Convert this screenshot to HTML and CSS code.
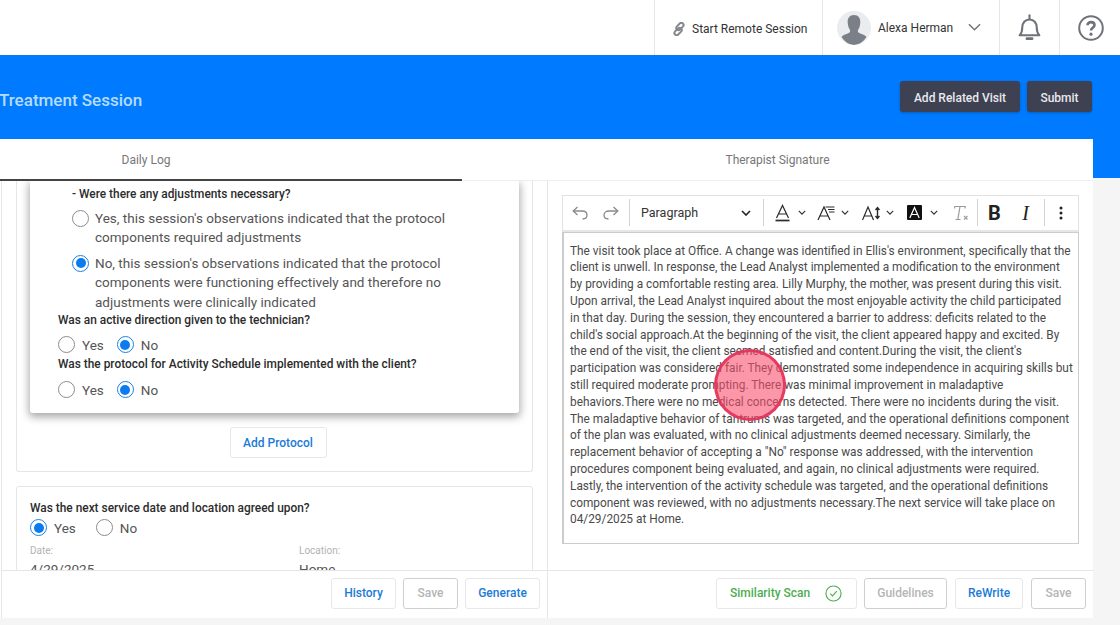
FILE: index.html
```html
<!DOCTYPE html>
<html lang="en">
<head>
<meta charset="utf-8">
<title>Treatment Session</title>
<link rel="stylesheet" href="styles.css">
</head>
<body>
<header class="topbar">
  <div class="top-cell remote">
    <svg class="link-icon" viewBox="0 0 14 14" width="14" height="14" fill="none" stroke="#85888e" stroke-width="2"><rect x="5.700" y="0.300" width="4.400" height="8.400" rx="2.200" transform="rotate(45 7.900 4.500)"/><rect x="3.900" y="5.300" width="4.400" height="8.400" rx="2.200" transform="rotate(45 6.100 9.500)"/></svg>
    <span>Start Remote Session</span>
  </div>
  <div class="top-cell user">
    <span class="avatar"><svg viewBox="0 0 34 34" width="34" height="34"><path fill="#7b7f87" d="M17 4c4.500 0 6.600 3.300 6.300 7.500-.2 2.800-.7 5.200-2 7-.7 1-.6 2.600.6 3.300 2.400 1.300 6 2.100 7.600 4.200A16.800 16.800 0 0 1 17 34 16.800 16.800 0 0 1 4.500 26c1.600-2.100 5.200-2.900 7.600-4.200 1.200-.7 1.300-2.300.6-3.300-1.300-1.800-1.800-4.200-2-7C10.400 7.300 12.500 4 17 4z"/></svg></span>
    <span class="user-name">Alexa Herman</span>
    <svg class="user-chev" viewBox="0 0 14 8" width="13" height="8" fill="none" stroke="#73767c" stroke-width="1.600"><path d="M1 1l6 6 6-6"/></svg>
  </div>
  <div class="top-cell bell">
    <svg viewBox="0 0 24 28" width="25" height="29" fill="none" stroke="#6f7278" stroke-width="2"><path d="M2.500 21.500c2-2 2.500-3.500 2.500-7.500 0-4.500 2.800-7.800 7-7.800s7 3.300 7 7.800c0 4 .5 5.500 2.500 7.500z" stroke-linejoin="round"/><path d="M12 2.200v3.500" stroke-linecap="round"/><path d="M9.500 24.800h5" stroke-width="2.600" stroke-linecap="round"/></svg>
  </div>
  <div class="top-cell help">
    <svg viewBox="0 0 26 26" width="26" height="26" fill="none" stroke="#6f7278" stroke-width="2"><circle cx="13" cy="13" r="11.800"/><path d="M9.500 10.300c0-2 1.500-3.200 3.500-3.200s3.500 1.200 3.500 3c0 2.700-3.500 2.600-3.500 5.400" stroke-width="2.600"/><circle cx="13" cy="19.200" r="1.600" fill="#6f7278" stroke="none"/></svg>
  </div>
</header>

<div class="shell">
  <main class="main">
    <section class="banner">
      <h1 class="title">Treatment Session</h1>
      <div class="banner-actions">
        <button class="dark-btn related">Add Related Visit</button>
        <button class="dark-btn submit">Submit</button>
      </div>
    </section>

    <nav class="tabs">
      <div class="tab active">Daily Log</div>
      <div class="tab other">Therapist Signature</div>
    </nav>

    <div class="panels">
      <section class="panel left">
        <div class="panel-scroll">
          <div class="card first">
            <div class="protocol">
              <p class="q sub">- Were there any adjustments necessary?</p>
              <div class="opt">
                <span class="radio"></span>
                <span>Yes, this session's observations indicated that the protocol components required adjustments</span>
              </div>
              <div class="opt second">
                <span class="radio on"></span>
                <span>No, this session's observations indicated that the protocol components were functioning effectively and therefore no adjustments were clinically indicated</span>
              </div>
              <p class="q">Was an active direction given to the technician?</p>
              <div class="yn">
                <label class="yn-item"><span class="radio"></span>Yes</label>
                <label class="yn-item"><span class="radio on"></span>No</label>
              </div>
              <p class="q">Was the protocol for Activity Schedule implemented with the client?</p>
              <div class="yn last">
                <label class="yn-item"><span class="radio"></span>Yes</label>
                <label class="yn-item"><span class="radio on"></span>No</label>
              </div>
            </div>
            <div class="add-row"><button class="btn blue add">Add Protocol</button></div>
          </div>

          <div class="card next">
            <p class="q">Was the next service date and location agreed upon?</p>
            <div class="yn wide">
              <label class="yn-item"><span class="radio on"></span>Yes</label>
              <label class="yn-item"><span class="radio"></span>No</label>
            </div>
            <div class="fields">
              <div><div class="f-label">Date:</div><div class="f-value">4/29/2025</div></div>
              <div><div class="f-label">Location:</div><div class="f-value">Home</div></div>
            </div>
          </div>
        </div>
        <footer class="panel-foot">
          <button class="btn blue hist">History</button>
          <button class="btn muted save-l">Save</button>
          <button class="btn blue gen">Generate</button>
        </footer>
      </section>

      <section class="panel right">
        <div class="editor-wrap">
          <div class="toolbar">
            <svg class="ti undo" viewBox="0 0 16 14" width="16" height="14" fill="none" stroke="#8a8a8a" stroke-width="1.300"><path d="M5.500 1 1.200 5 5.500 9"/><path d="M1.200 5H10c3 0 5 1.700 5 4.100S13 13 10.500 13"/></svg>
            <svg class="ti redo" viewBox="0 0 16 14" width="16" height="14" fill="none" stroke="#8a8a8a" stroke-width="1.300"><path d="M10.500 1l4.300 4-4.300 4"/><path d="M14.800 5H6C3 5 1 6.700 1 9.100S3 13 5.500 13"/></svg>
            <span class="sep s1"></span>
            <span class="para">Paragraph</span>
            <svg class="chev big" viewBox="0 0 10 6" width="10" height="6" fill="none" stroke="#222" stroke-width="1.600"><path d="M1 1l4 4 4-4"/></svg>
            <span class="sep s2"></span>
            <svg class="ti fc" viewBox="0 0 15 18" width="15" height="18" fill="none" stroke="#2a2a2a" stroke-width="1.200"><path d="M1.500 14 7.500 1.500 13.500 14M3.500 10h8"/><path d="M0.500 16.500h14" stroke-width="1.700"/></svg>
            <svg class="chev c1" viewBox="0 0 10 6" width="8" height="5" fill="none" stroke="#333" stroke-width="1.500"><path d="M1 1l4 4 4-4"/></svg>
            <svg class="ti ff" viewBox="0 0 18 16" width="18" height="16" fill="none" stroke="#2a2a2a" stroke-width="1.200"><path d="M1 15 7 2 13 15M3 11h8"/><path stroke-width="1" d="M8.500 2h9M11 4.500h6.500M12 7h5.500"/></svg>
            <svg class="chev c2" viewBox="0 0 10 6" width="8" height="5" fill="none" stroke="#333" stroke-width="1.500"><path d="M1 1l4 4 4-4"/></svg>
            <svg class="ti fs" viewBox="0 0 18 16" width="18" height="16" fill="none" stroke="#2a2a2a" stroke-width="1.200"><path d="M0.500 15 6 2 11.500 15M2.500 11h7"/><path stroke-width="1.400" d="M15.500 3v10M13.500 5l2-2.500 2 2.500M13.500 11l2 2.500 2-2.500"/></svg>
            <svg class="chev c3" viewBox="0 0 10 6" width="8" height="5" fill="none" stroke="#333" stroke-width="1.500"><path d="M1 1l4 4 4-4"/></svg>
            <svg class="ti bg" viewBox="0 0 15 15" width="15" height="15"><rect width="15" height="15" rx="1" fill="#111"/><path fill="none" stroke="#fff" stroke-width="1.200" d="M2.800 13 7.500 2.500 12.200 13M4.500 9.500h6"/></svg>
            <svg class="chev c4" viewBox="0 0 10 6" width="8" height="5" fill="none" stroke="#333" stroke-width="1.500"><path d="M1 1l4 4 4-4"/></svg>
            <svg class="ti tx" viewBox="0 0 17 16" width="17" height="16" fill="none" stroke="#9a9a9a"><path stroke-width="1.200" d="M2.500 3.500l.3-2h10.400l-.3 2M8 1.500 5.800 14.500M3.500 14.500h5"/><path stroke-width="1.100" d="M12 11l3.500 3.500M15.500 11 12 14.500"/></svg>
            <span class="sep s3"></span>
            <b class="bold">B</b>
            <i class="ital">I</i>
            <span class="sep s4"></span>
            <svg class="ti more" viewBox="0 0 4 14" width="4" height="14" fill="#222"><circle cx="2" cy="2" r="1.500"/><circle cx="2" cy="7" r="1.500"/><circle cx="2" cy="12" r="1.500"/></svg>
          </div>
          <div class="editor">The visit took place at Office. A change was identified in Ellis's environment, specifically that the client is unwell. In response, the Lead Analyst implemented a modification to the environment by providing a comfortable resting area. Lilly Murphy, the mother, was present during this visit. Upon arrival, the Lead Analyst inquired about the most enjoyable activity the child participated in that day. During the session, they encountered a barrier to address: deficits related to the child's social approach.At the beginning of the visit, the client appeared happy and excited. By the end of the visit, the client seemed satisfied and content.During the visit, the client's participation was considered fair. They demonstrated some independence in acquiring skills but still required moderate prompting. There was minimal improvement in maladaptive behaviors.There were no medical concerns detected. There were no incidents during the visit. The maladaptive behavior of tantrums was targeted, and the operational definitions component of the plan was evaluated, with no clinical adjustments deemed necessary. Similarly, the replacement behavior of accepting a "No" response was addressed, with the intervention procedures component being evaluated, and again, no clinical adjustments were required. Lastly, the intervention of the activity schedule was targeted, and the operational definitions component was reviewed, with no adjustments necessary.The next service will take place on 04/29/2025 at Home.</div>
        </div>
        <footer class="panel-foot">
          <button class="btn green sim">Similarity Scan
            <svg viewBox="0 0 18 18" width="17" height="17" fill="none" stroke="#4caf50" stroke-width="1.200"><circle cx="9" cy="9" r="8"/><path d="M5.500 9.200 8 11.500l4.500-5"/></svg>
          </button>
          <button class="btn muted guide">Guidelines</button>
          <button class="btn blue rew">ReWrite</button>
          <button class="btn muted save-r">Save</button>
        </footer>
      </section>
    </div>
  </main>
  <div class="side"></div>
</div>
<div class="pointer"></div>
</body>
</html>
```
FILE: styles.css
```css
* { box-sizing: border-box; }
html, body { margin: 0; padding: 0; height: 625px; overflow: hidden; }
body { background: #f5f5f5; font-family: Roboto, "Liberation Sans", sans-serif; color: #333; position: relative; }
p { margin: 0; }
button { font-family: inherit; cursor: pointer; }

.topbar { height: 55px; background: #fff; display: flex; justify-content: flex-end; }
.top-cell { height: 55px; display: flex; align-items: center; border-left: 1px solid #e6e6e6; }
.remote { width: 168px; padding-left: 17px; font-size: 12px; color: #333; padding-top: 2px; }
.link-icon { margin-right: 6px; }
.user { width: 177px; padding-left: 14px; font-size: 12px; }
.avatar { width: 34px; height: 34px; border-radius: 50%; background: #ebecef; overflow: hidden; display: block; flex: none; }
.avatar svg { display: block; }
.user-name { margin-left: 7px; color: #333; }
.user-chev { margin-left: 15px; margin-top: -2px; }
.bell { width: 60px; justify-content: center; }
.help { width: 61px; padding-left: 18px; }

.shell { display: flex; height: 570px; }
.main { width: 1093px; flex: none; display: flex; flex-direction: column; }
.side { flex: 1; height: 123px; background: #007bff; }

.banner { height: 84px; background: #007bff; display: flex; align-items: center; justify-content: space-between; padding-top: 1px; }
.title { margin: 4px 0 0 -1px; font-size: 17px; font-weight: 500; color: #b5dcff; }
.banner-actions { display: flex; gap: 7px; padding-right: 1px; margin-top: -2px; }
.dark-btn { height: 31px; background: #3e4152; color: #e9e9ee; border: 0; border-radius: 3px; font-size: 12px; font-weight: 500; box-shadow: 0 1px 3px rgba(0,0,0,.25); padding: 2px 0 0; }
.related { width: 120px; }
.submit { width: 65px; }

.tabs { height: 42px; background: #fff; display: flex; font-size: 12px; color: #777; flex: none; }
.tab { display: flex; align-items: center; justify-content: center; padding-top: 1px; }
.active { width: 462px; padding-right: 170px; border-bottom: 2px solid #444; }
.other { flex: 1; border-bottom: 1px solid #eee; }

.panels { display: flex; background: #fff; height: 437px; flex: none; }
.panel { display: flex; flex-direction: column; height: 437px; min-height: 0; }
.left { width: 547px; margin-left: 1px; border-left: 1px solid #e6e6e6; border-right: 1px solid #e6e6e6; flex: none; }
.right { flex: 1; }
.panel-scroll { height: 389px; overflow: hidden; padding: 0 14px; flex: none; }

.card { border: 1px solid #e6e6e6; border-radius: 3px; }
.first { border-top: 0; height: 291px; padding: 0 13px; border-radius: 0 0 3px 3px; }
.protocol { height: 232px; background: #fff; border-radius: 0 0 3px 3px; box-shadow: 0 3px 9px 1px rgba(0,0,0,.35); padding: 5px 0 0 28px; margin: 0; }
.q { font-size: 11.900px; font-weight: 500; color: #2c2c2c; line-height: 16px; }
.q.sub { padding-left: 14px; }
.opt { display: flex; gap: 6px; width: 400px; margin: 7px 0 0 14px; font-size: 13.500px; line-height: 19.400px; color: #555; }
.opt.second { margin-top: 6px; }
.radio { width: 17px; height: 17px; border: 1.500px solid #8b8b8b; border-radius: 50%; flex: none; background: #fff; position: relative; display: block; margin-top: 1px; }
.radio.on { border-color: #1a80e5; }
.radio.on::after { content: ""; position: absolute; inset: 2.500px; background: #0a7cf0; border-radius: 50%; }
.yn { display: flex; gap: 13px; height: 28px; padding-top: 8px; }
.yn.last { padding-top: 9px; }
.yn-item { display: flex; gap: 7px; font-size: 13.500px; color: #555; line-height: 19px; }
.yn-item .radio { margin-top: 0; }
.yn.wide { gap: 20px; height: 21px; padding-top: 3px; }
.add-row { display: flex; justify-content: center; padding: 14px 0 0 7px; }

.btn { height: 31px; background: #fff; border: 1px solid #e8e8e8; border-radius: 3px; font-size: 12px; font-weight: 500; padding: 0; }
.btn.blue { color: #1a7bd8; }
.btn.muted { color: #b5b5b5; border: 1px solid #cfcfcf; }
.btn.green { color: #4caf50; }
.add { width: 97px; height: 31px; }

.next { margin-top: 14px; height: 120px; padding: 13px 13px 0; }
.fields { display: grid; grid-template-columns: 269px 1fr; margin-top: 3px; }
.f-label { font-size: 10px; color: #b2b2b2; line-height: 14px; margin-top: 4px; }
.f-value { font-size: 13.500px; color: #555; margin-top: 2px; line-height: 18px; }

.panel-foot { height: 48px; border-top: 1px solid #e6e6e6; display: flex; justify-content: flex-end; align-items: center; gap: 7px; padding-right: 7px; flex: none; padding-bottom: 3px; }
.hist { width: 65px; }
.save-l { width: 55px; }
.gen { width: 75px; }
.sim { width: 141px; display: flex; align-items: center; justify-content: space-between; padding: 0 14px 0 13px; }
.guide { width: 83px; }
.rew { width: 68px; margin-left: 1px; }
.save-r { width: 55px; margin-left: 1px; }

.editor-wrap { height: 389px; flex: none; padding: 14px 14px 0 14px; }
.toolbar { height: 37px; border: 1px solid #e2e2e2; border-bottom: 2px solid #e6e6e6; display: flex; align-items: center; padding: 0 0 1px 9px; }
.ti { flex: none; display: block; }
.redo { margin-left: 15px; }
.sep { width: 1px; height: 27px; background: #d4d4d4; flex: none; }
.s1 { margin-left: 10px; }
.s2 { margin-left: 12px; }
.s3 { margin-left: 8px; }
.s4 { margin-left: 12px; }
.para { font-size: 12.500px; color: #333; margin-left: 11px; width: 100px; flex: none; }
.chev { flex: none; display: block; }
.fc { margin-left: 11px; }
.c1 { margin-left: 8px; }
.ff { margin-left: 11px; }
.c2 { margin-left: 6px; }
.fs { margin-left: 13px; }
.c3 { margin-left: 6px; }
.bg { margin-left: 13px; }
.c4 { margin-left: 8px; }
.tx { margin-left: 14px; }
.bold { font-size: 20px; line-height: 20px; color: #222; margin-left: 10px; width: 14px; font-weight: 700; }
.ital { font-family: "Liberation Serif", serif; font-size: 20px; line-height: 20px; color: #222; margin-left: 17px; width: 13px; text-align: center; }
.more { margin-left: 14px; }
.editor { height: 312px; border: 1px solid #ccc; border-left: 2px solid #ccc; padding: 9.600px 4.800px 0 6px; font-size: 11.850px; line-height: 16.800px; color: #4a4a4a; }

.pointer { position: absolute; left: 714px; top: 349px; width: 72px; height: 72px; border-radius: 50%; background: rgba(248,76,106,.58); border: 3px solid rgba(228,50,90,.9); }
```
